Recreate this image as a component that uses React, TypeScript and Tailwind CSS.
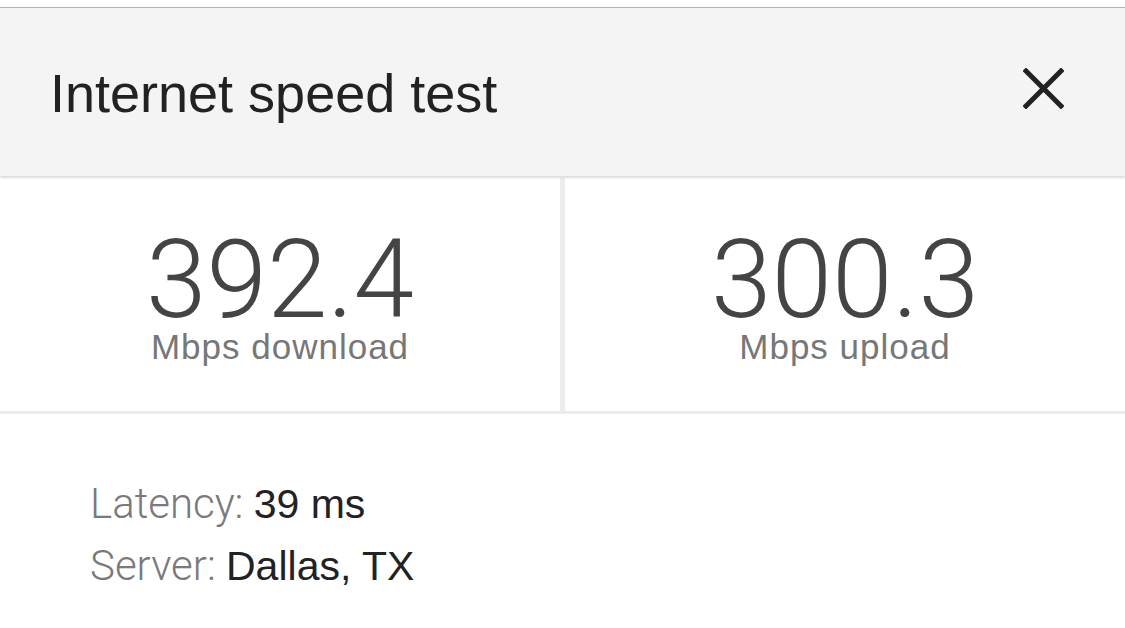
export default function App() {
  return (
    <div className="h-[628px] w-[1125px] overflow-hidden bg-white font-['Liberation_Sans',Arial,sans-serif]">
      <div className="h-[7px] bg-white" />

      {/* header */}
      <header className="relative z-10 flex h-[169px] items-center justify-between border-t border-[#b4b4b4] bg-[#f4f4f4] pr-[61px] pl-[50px] shadow-[0_2px_2px_rgba(0,0,0,0.14)]">
        <h1 className="mt-[2px] text-[54px] leading-none text-[#222]">Internet speed test</h1>
        <svg
          className="mb-[8px] size-[41px] text-[#222]"
          viewBox="0 0 41 41"
          fill="none"
          stroke="currentColor"
          strokeWidth="5"
          strokeLinecap="square"
        >
          <path d="M3 3 L38 38 M38 3 L3 38" />
        </svg>
      </header>

      {/* results */}
      <div className="mt-[2px] flex h-[236px] border-b-[3px] border-[#ececec]">
        <Stat value="392.4" label="Mbps download" />
        <div className="w-[5px] bg-[#ececec]" />
        <Stat value="300.3" label="Mbps upload" />
      </div>

      <div className="pt-[59px] pl-[90px] text-[41px] leading-[62px]">
        <p>
          <span className="font-['Roboto',sans-serif] text-[42px] font-light text-[#7a7a7a]">Latency: </span>
          <span className="text-[#222]">39 ms</span>
        </p>
        <p>
          <span className="font-['Roboto',sans-serif] text-[42px] font-light text-[#7a7a7a]">Server: </span>
          <span className="text-[#222]">Dallas, TX</span>
        </p>
      </div>
    </div>
  )
}

function Stat({ value, label }: { value: string; label: string }) {
  return (
    <div className="flex w-[560px] flex-col items-center pt-[62px]">
      <p className="font-['Roboto',sans-serif] text-[109px] leading-[80px] font-light text-[#444]">{value}</p>
      <p className="mt-[7px] text-[35px] leading-[40px] tracking-[1px] text-[#777]">{label}</p>
    </div>
  )
}
